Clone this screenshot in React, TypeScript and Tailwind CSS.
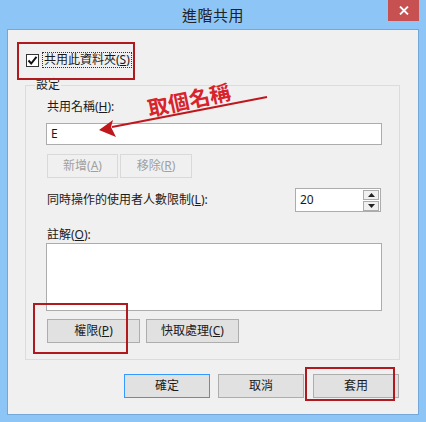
import React from 'react';

const ui = { fontFamily: '"Noto Sans", "Noto Sans CJK TC", sans-serif' };

function Btn({ children, w, disabled, primary }: { children: React.ReactNode; w: string; disabled?: boolean; primary?: boolean }) {
  const base = 'h-[24px] flex items-center justify-center text-[12px] leading-[16px] border';
  const tone = disabled
    ? 'bg-[#f0f0f0] border-[#d9d9d9] text-[#a0a0a0]'
    : primary
      ? 'bg-[#e1e1e1] border-[#3399ff] text-[#1a1a1a]'
      : 'bg-[#e1e1e1] border-[#adadad] text-[#1a1a1a]';
  return <div className={`${base} ${tone} ${w}`}>{children}</div>;
}

export default function App() {
  return (
    <div className="relative w-[426px] h-[422px] bg-[#8dc5f6] flex flex-col px-[7px] pb-[7px] text-[#1a1a1a]" style={ui}>
      {/* title bar */}
      <div className="relative h-[29px] flex items-center justify-center">
        <span className="text-[15px] leading-[20px] text-[#222] tracking-[0.5px]">進階共用</span>
        <div className="absolute right-0 top-0 w-[31px] h-[21px] bg-[#c75050] flex items-center justify-center">
          <svg width="10" height="9" viewBox="0 0 10 9">
            <path d="M1 0.5 L9 8.5 M9 0.5 L1 8.5" stroke="#fff" strokeWidth="1.8" />
          </svg>
        </div>
      </div>

      {/* client */}
      <div className="flex-1 bg-[#f0f0f0] border border-[#73a7d8] flex flex-col">
        <div className="flex items-center mt-[22px] ml-[18px] h-[16px]">
          <div className="w-[13px] h-[13px] border border-[#333] bg-white flex items-center justify-center">
            <svg width="11" height="11" viewBox="0 0 11 11">
              <path d="M1.5 5.5 L4.2 8.5 L9.5 1.8" stroke="#111" strokeWidth="2" fill="none" />
            </svg>
          </div>
          <span className="ml-[3px] px-[1px] border border-dotted border-[#333] text-[12px] leading-[14px]">
            共用此資料夾(<u>S</u>)
          </span>
        </div>

        {/* group box */}
        <div className="mt-[17px] ml-[17px] w-[375px] border border-[#dcdcdc] flex flex-col pl-[20px] pb-[16px]">
          <span className="-mt-[9px] -ml-[11px] px-[1px] w-fit bg-[#f0f0f0] text-[12px] leading-[16px]">設定</span>
          <span className="mt-[6px] ml-[1px] text-[12px] leading-[16px]">共用名稱(<u>H</u>):</span>
          <div className="mt-[8px] w-[336px] h-[22px] bg-white border border-[#acacac] flex items-center pl-[4px] text-[12px]">E</div>
          <div className="mt-[9px] ml-[1px] flex gap-[2px]">
            <Btn w="w-[71px]" disabled>新增(<u>A</u>)</Btn>
            <Btn w="w-[72px]" disabled>移除(<u>R</u>)</Btn>
          </div>
          <div className="mt-[10px] flex items-center justify-between w-[335px]">
            <span className="ml-[1px] text-[12px] leading-[16px]">同時操作的使用者人數限制(<u>L</u>):</span>
            <div className="w-[86px] h-[24px] bg-white border border-[#acacac] flex items-center justify-between pl-[4px] pr-[1px]">
              <span className="text-[12px]">20</span>
              <div className="flex flex-col gap-[1px]">
                <div className="w-[16px] h-[10px] bg-[#f0f0f0] border border-[#acacac] flex items-center justify-center">
                  <svg width="7" height="4" viewBox="0 0 7 4"><path d="M0 4 L3.5 0 L7 4 Z" fill="#222" /></svg>
                </div>
                <div className="w-[16px] h-[10px] bg-[#f0f0f0] border border-[#acacac] flex items-center justify-center">
                  <svg width="7" height="4" viewBox="0 0 7 4"><path d="M0 0 L3.5 4 L7 0 Z" fill="#222" /></svg>
                </div>
              </div>
            </div>
          </div>
          <span className="mt-[15px] ml-[1px] text-[12px] leading-[16px]">註解(<u>O</u>):</span>
          <div className="w-[336px] h-[68px] bg-white border border-[#acacac]" />
          <div className="mt-[8px] ml-[1px] flex gap-[6px]">
            <Btn w="w-[93px]">權限(<u>P</u>)</Btn>
            <Btn w="w-[93px]">快取處理(<u>C</u>)</Btn>
          </div>
        </div>

        {/* dialog buttons */}
        <div className="mt-[14px] ml-[116px] flex">
          <Btn w="w-[86px]" primary>確定</Btn>
          <div className="ml-[8px]"><Btn w="w-[86px]">取消</Btn></div>
          <div className="ml-[9px]"><Btn w="w-[86px]">套用</Btn></div>
        </div>
      </div>

      {/* annotations */}
      <div className="absolute left-[17px] top-[42px] w-[118px] h-[38px] border-2 border-[#b0191e]" />
      <div className="absolute left-[33px] top-[303px] w-[95px] h-[51px] border-2 border-[#b0191e]" />
      <div className="absolute left-[305px] top-[367px] w-[90px] h-[34px] border-2 border-[#b0191e]" />
      <span className="absolute left-[147px] top-[87px] text-[21px] leading-[26px] font-bold text-[#d8232b] -rotate-[12deg] origin-center whitespace-nowrap">
        取個名稱
      </span>
      <svg className="absolute left-0 top-0" width="426" height="422" viewBox="0 0 426 422">
        <path d="M112 127 L267 97" stroke="#c0171d" strokeWidth="2.2" />
        <path d="M99 130 L113 120 L111 127 L116 137 Z" fill="#c0171d" />
      </svg>
    </div>
  );
}
